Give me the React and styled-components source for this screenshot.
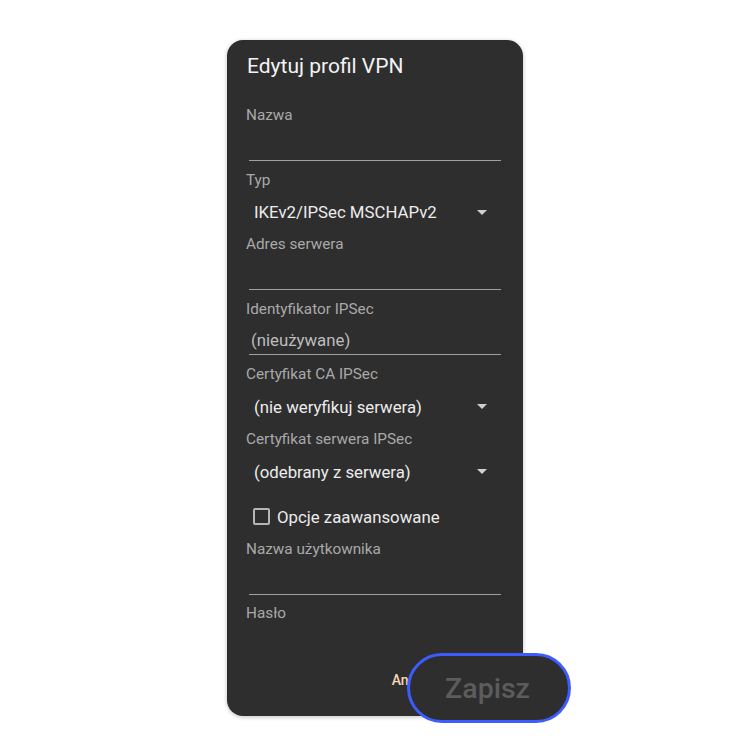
import React from "react";
import styled, { createGlobalStyle } from "styled-components";

const GlobalStyle = createGlobalStyle`
  html, body {
    margin: 0;
    padding: 0;
    background: #ffffff;
    font-family: Roboto, "Noto Sans", "Liberation Sans", sans-serif;
  }
`;

const Page = styled.div`
  display: flex;
  justify-content: center;
  padding-top: 40px;
  height: 716px;
`;

const Dialog = styled.section`
  position: relative;
  width: 296px;
  height: 676px;
  background: #2e2e2e;
  border-radius: 16px;
  box-shadow: 0 1px 4px rgba(0, 0, 0, 0.25);
  display: flex;
  flex-direction: column;
`;

const Title = styled.h2`
  margin: 0;
  padding: 14px 20px 0;
  height: 24px;
  line-height: 24px;
  font-size: 21px;
  font-weight: 400;
  color: #f3f3f3;
`;

const Body = styled.div`
  flex: 1;
  overflow: hidden;
  padding: 27px 22px 0 19px;
  display: flex;
  flex-direction: column;
`;

const Label = styled.div`
  height: 20px;
  line-height: 20px;
  font-size: 15.3px;
  color: #a9a9a9;
  margin-top: ${(p) => p.$gap || 0}px;
`;

const Input = styled.div`
  height: 36px;
  margin-left: 3px;
  border-bottom: 1px solid #a0a0a0;
  padding: 9px 0 0 2px;
  box-sizing: border-box;
  line-height: 24px;
  font-size: 16.8px;
  color: #bdbdbd;
  flex-shrink: 0;
`;

const Select = styled.div`
  height: ${(p) => p.$h || 45}px;
  display: flex;
  align-items: center;
  justify-content: space-between;
  padding: 0 14px 0 8px;
  font-size: 16.8px;
  color: #ececec;
  flex-shrink: 0;
`;

const Arrow = styled.span`
  width: 0;
  height: 0;
  border-left: 5px solid transparent;
  border-right: 5px solid transparent;
  border-top: 5px solid #d0d0d0;
`;

const CheckRow = styled.label`
  height: 45px;
  display: flex;
  align-items: center;
  gap: 7px;
  padding-left: 7px;
  font-size: 16.8px;
  color: #ececec;
  flex-shrink: 0;
`;

const Box = styled.span`
  width: 13px;
  height: 13px;
  border: 2px solid #b5b5b5;
  border-radius: 2px;
`;

const Actions = styled.div`
  height: 68px;
  display: flex;
  justify-content: flex-end;
  align-items: center;
  gap: 30px;
  padding: 0 20px 4px 0;
  box-sizing: border-box;
`;

const TextButton = styled.button`
  background: none;
  border: none;
  padding: 0;
  font-family: inherit;
  font-size: 14px;
  font-weight: 500;
  color: ${(p) => (p.$muted ? "#6a6a6a" : "#f6d7b8")};
`;

const FocusZoom = styled.div`
  position: absolute;
  left: 180px;
  top: 613px;
  width: 164px;
  height: 70px;
  box-sizing: border-box;
  border: 3px solid #3d5cff;
  border-radius: 35px;
  background: #2e2e2e;
  display: flex;
  align-items: center;
  justify-content: center;
  padding-right: 3px;
  font-size: 28.5px;
  font-weight: 500;
  color: #5c5c5c;
`;

export default function App() {
  return (
    <>
      <GlobalStyle />
      <Page>
        <Dialog>
          <Title>Edytuj profil VPN</Title>
          <Body>
            <Label>Nazwa</Label>
            <Input />
            <Label $gap={9}>Typ</Label>
            <Select $h={44}>
              IKEv2/IPSec MSCHAPv2
              <Arrow />
            </Select>
            <Label>Adres serwera</Label>
            <Input />
            <Label $gap={9}>Identyfikator IPSec</Label>
            <Input>(nieużywane)</Input>
            <Label $gap={9}>Certyfikat CA IPSec</Label>
            <Select>
              (nie weryfikuj serwera)
              <Arrow />
            </Select>
            <Label>Certyfikat serwera IPSec</Label>
            <Select>
              (odebrany z serwera)
              <Arrow />
            </Select>
            <CheckRow>
              <Box />
              Opcje zaawansowane
            </CheckRow>
            <Label>Nazwa użytkownika</Label>
            <Input />
            <Label $gap={8}>Hasło</Label>
            <Input />
          </Body>
          <Actions>
            <TextButton>Anuluj</TextButton>
            <TextButton $muted>Zapisz</TextButton>
          </Actions>
          <FocusZoom>Zapisz</FocusZoom>
        </Dialog>
      </Page>
    </>
  );
}
